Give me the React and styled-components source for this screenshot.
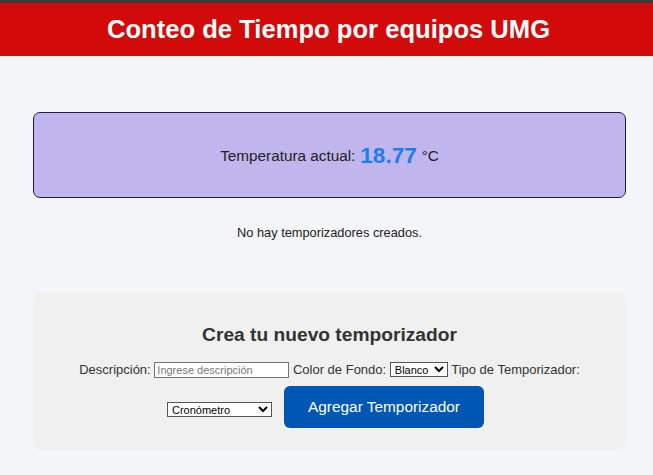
import React from "react";
import styled, { createGlobalStyle } from "styled-components";

const Global = createGlobalStyle`
  html, body { margin: 0; padding: 0; background: #f4f5f9; }
  body { font-family: "Liberation Sans", Arial, sans-serif; color: #222; }
`;

const Header = styled.header`
  background: #d20a0a;
  border-top: 3px solid #3a3a3a;
  height: 53px;
  display: flex;
  align-items: center;
  justify-content: center;
  padding-left: 4px;
`;

const Title = styled.h1`
  margin: 0;
  color: #fff;
  font-size: 25.6px;
  font-weight: bold;
`;

const Main = styled.main`
  padding: 56px 27px 0 33px;
  display: flex;
  flex-direction: column;
`;

const TempBox = styled.div`
  height: 82px;
  background: #c0b5ec;
  border: 1px solid #1f1a4d;
  border-radius: 7px;
  display: flex;
  align-items: center;
  justify-content: center;
  font-size: 15.3px;
  color: #222;
  padding-top: 2px;
`;

const TempValue = styled.span`
  color: #1a7ef2;
  font-weight: bold;
  font-size: 22.5px;
  margin: 0 5px;
`;

const Empty = styled.p`
  margin: 27px 0 0;
  text-align: center;
  font-size: 12.8px;
  color: #222;
`;

const FormBox = styled.section`
  margin-top: 52px;
  background: #f0f0f0;
  border-radius: 10px;
  padding: 32px 20px 23px;
  text-align: center;
  font-size: 13px;
  color: #333;
`;

const FormTitle = styled.h2`
  margin: 0 0 13px;
  font-size: 19.2px;
  font-weight: bold;
  color: #333;
`;

const Input = styled.input`
  font-family: "Liberation Sans", Arial, sans-serif;
  font-size: 11px;
  width: 135px;
  height: 16px;
  box-sizing: border-box;
  border: 1px solid #767676;
  padding: 1px 2px;
  background: #fff;
  &::placeholder { color: #777; }
`;

const Select = styled.select`
  font-family: "Liberation Sans", Arial, sans-serif;
  font-size: 11px;
  height: 15px;
  box-sizing: border-box;
  border: 1px solid #555;
  border-radius: 0;
  padding: 0;
  background: #fff;
  color: #000;
  width: ${(p) => p.$w}px;
`;

const Line = styled.div`
  line-height: 22px;
  margin-bottom: 5px;
`;

const Button = styled.button`
  font-family: "Liberation Sans", Arial, sans-serif;
  background: #0056b3;
  color: #fff;
  border: none;
  border-radius: 6px;
  font-size: 15.4px;
  width: 200px;
  height: 42px;
  margin: 0 8px 0 12px;
  cursor: pointer;
`;

const SecondLine = styled.div`
  display: flex;
  align-items: center;
  justify-content: center;
  & > select { margin-top: 5px; }
`;

export default function App() {
  return (
    <>
      <Global />
      <Header>
        <Title>Conteo de Tiempo por equipos UMG</Title>
      </Header>
      <Main>
        <TempBox>
          Temperatura actual: <TempValue>18.77</TempValue> °C
        </TempBox>
        <Empty>No hay temporizadores creados.</Empty>
        <FormBox>
          <FormTitle>Crea tu nuevo temporizador</FormTitle>
          <Line>
            Descripción: <Input placeholder="Ingrese descripción" /> Color de Fondo:{" "}
            <Select $w={58} defaultValue="blanco">
              <option value="blanco">Blanco</option>
            </Select>{" "}
            Tipo de Temporizador:
          </Line>
          <SecondLine>
            <Select $w={105} defaultValue="crono">
              <option value="crono">Cronómetro</option>
            </Select>
            <Button>Agregar Temporizador</Button>
          </SecondLine>
        </FormBox>
      </Main>
    </>
  );
}
